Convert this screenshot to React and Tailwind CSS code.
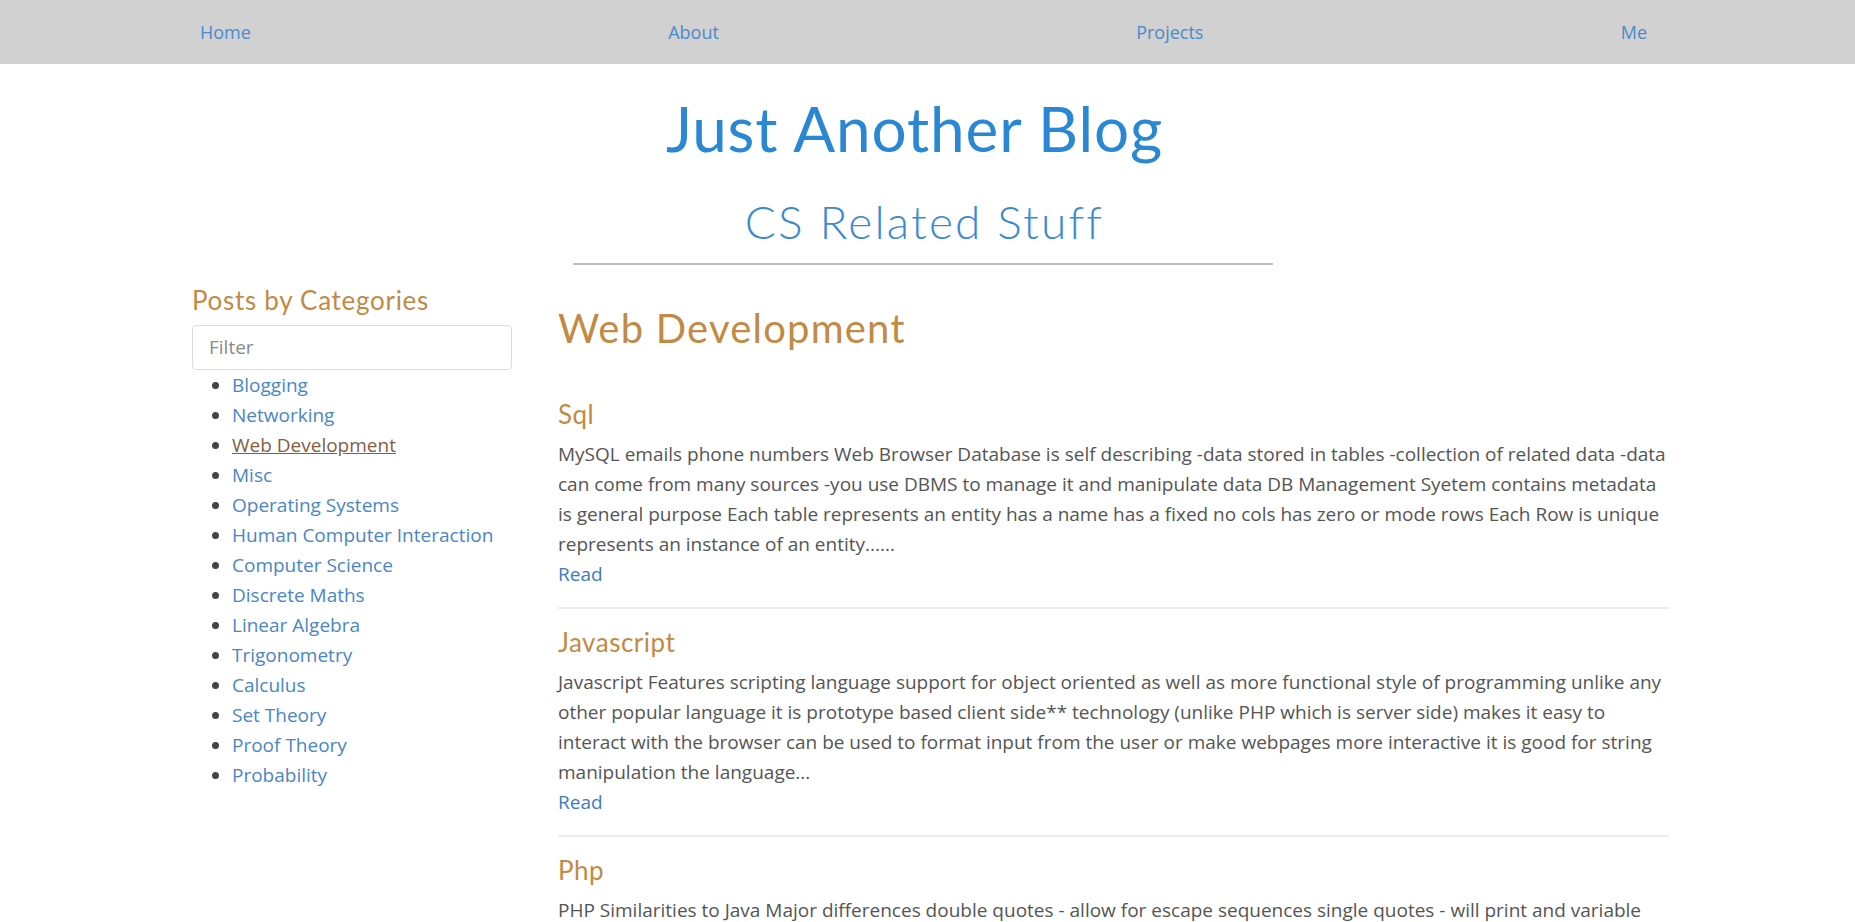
export default function App() {
  const cats = [
    "Blogging",
    "Networking",
    "Web Development",
    "Misc",
    "Operating Systems",
    "Human Computer Interaction",
    "Computer Science",
    "Discrete Maths",
    "Linear Algebra",
    "Trigonometry",
    "Calculus",
    "Set Theory",
    "Proof Theory",
    "Probability",
  ];
  const posts = [
    {
      title: "Sql",
      body: "MySQL emails phone numbers Web Browser Database is self describing -data stored in tables -collection of related data -data can come from many sources -you use DBMS to manage it and manipulate data DB Management Syetem contains metadata is general purpose Each table represents an entity has a name has a fixed no cols has zero or mode rows Each Row is unique represents an instance of an entity......",
    },
    {
      title: "Javascript",
      body: "Javascript Features scripting language support for object oriented as well as more functional style of programming unlike any other popular language it is prototype based client side** technology (unlike PHP which is server side) makes it easy to interact with the browser can be used to format input from the user or make webpages more interactive it is good for string manipulation the language...",
    },
    {
      title: "Php",
      body: "PHP Similarities to Java Major differences double quotes - allow for escape sequences single quotes - will print and variable names literally and more details about the language and how it works on the server...",
    },
  ];
  const body = { fontFamily: '"Open Sans", "Noto Sans", sans-serif' };
  const head = { fontFamily: 'Lato, "Open Sans", sans-serif' };
  return (
    <div className="bg-white overflow-hidden h-[922px]" style={body}>
      <nav className="h-[64px] bg-[#d1d1d1] flex items-center justify-between pl-[200px] pr-[208px] text-[18px] text-[#4a8bcb]">
        <a>Home</a>
        <a>About</a>
        <a>Projects</a>
        <a>Me</a>
      </nav>
      <header className="flex flex-col items-center" style={head}>
        <h1 className="mt-[26px] mr-[26px] text-[62px] leading-[76px] text-[#2a87d3] tracking-[0.9px]">Just Another Blog</h1>
        <h2 className="mt-[27px] mr-[6px] text-[46px] leading-[58px] text-[#3a8ad0] font-light tracking-[2.2px]">CS Related Stuff</h2>
        <div className="mt-[12px] mr-[9px] w-[700px] h-[2px] bg-[#bdbdbd]" />
      </header>
      <div className="flex pl-[192px] pr-[186px]">
        <aside className="w-[320px] shrink-0">
          <h3 className="mt-[20px] text-[26px] leading-[30px] text-[#c28a44] tracking-[0.7px]" style={head}>Posts by Categories</h3>
          <div className="mt-[10px] h-[45px] border border-[#dcdcdc] rounded-[4px] flex items-center px-[16px] text-[19px] text-[#8a8a8a]">
            Filter
          </div>
          <ul className="list-disc pl-[40px] text-[19px] leading-[30px] text-[#4a86c5] marker:text-[#444]">
            {cats.map((c) => (
              <li key={c}>
                <a className={c === "Web Development" ? "text-[#82603f] underline" : ""}>{c}</a>
              </li>
            ))}
          </ul>
        </aside>
        <main className="ml-[46px] flex-1">
          <h2 className="mt-[41px] text-[40px] leading-[44px] text-[#c28a44] tracking-[1.2px]" style={head}>Web Development</h2>
          {posts.map((p, i) => (
            <div key={p.title}>
              {i > 0 && <div className="mt-[18px] mb-[19px] h-[2px] bg-[#ececec]" />}
              <h3 className={(i === 0 ? "mt-[50px] " : "mt-[18px] ") + "mb-[10px] text-[26px] leading-[29px] text-[#c28a44] tracking-[0.5px]"} style={head}>
                {p.title}
              </h3>
              <p className="text-[19px] leading-[30px] text-[#555]">{p.body}</p>
              <a className="block text-[19px] leading-[30px] text-[#3a7cc4]">Read</a>
            </div>
          ))}
        </main>
      </div>
    </div>
  );
}
